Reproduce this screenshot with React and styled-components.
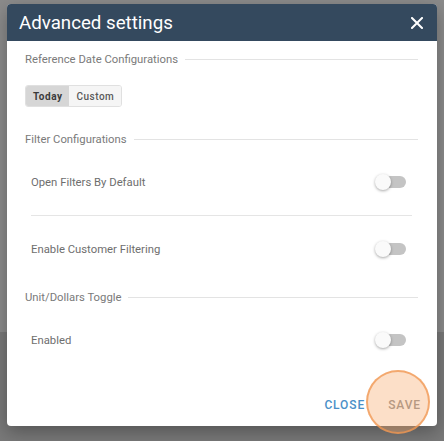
import React from 'react'
import styled, {createGlobalStyle} from 'styled-components'

const GlobalStyle = createGlobalStyle`
  html, body {
    margin: 0;
    padding: 0;
    background: #898989;
    font-family: Roboto, "Liberation Sans", sans-serif;
  }
`

const Backdrop = styled.div`
  width: 444px;
  height: 441px;
  padding: 4px 7px 0;
  box-sizing: border-box;
  background: linear-gradient(to bottom, #8b8b8b 0, #8b8b8b 332px, #797979 332px);
  overflow: hidden;
`

const Dialog = styled.div`
  width: 430px;
  background: #fff;
  border-radius: 4px;
  box-shadow: 0 6px 18px rgba(0, 0, 0, .3);
  display: flex;
  flex-direction: column;
`

const Header = styled.div`
  height: 37px;
  background: #34495e;
  border-radius: 4px 4px 0 0;
  display: flex;
  align-items: center;
  justify-content: space-between;
  padding: 0 14px 0 12px;
`

const Title = styled.h2`
  margin: 0;
  font-size: 18.7px;
  font-weight: 400;
  color: #fff;
`

const CloseIcon = styled.svg`
  width: 12px;
  height: 12px;
  display: block;
`

const Body = styled.div`
  padding: 8px 19px 0 18px;
  display: flex;
  flex-direction: column;
`

const SectionHead = styled.div`
  height: 20px;
  margin-top: ${props => props.top || 0}px;
  display: flex;
  align-items: center;
  gap: 7px;
  font-size: 11.3px;
  color: #7a7a7a;
  &::after {
    content: '';
    flex: 1;
    height: 1px;
    background: #e3e3e3;
  }
`

const ButtonGroup = styled.div`
  margin-top: 16px;
  align-self: flex-start;
  display: flex;
  height: 22px;
  border: 1px solid #e0e0e0;
  border-radius: 3px;
  overflow: hidden;
  box-sizing: border-box;
`

const Segment = styled.div`
  display: flex;
  align-items: center;
  padding: 0 7px;
  font-size: 10px;
  font-weight: ${props => props.active ? 700 : 500};
  letter-spacing: ${props => props.active ? '.5px' : '.5px'};
  color: ${props => props.active ? '#3a3a3a' : '#5a5a5a'};
  background: ${props => props.active ? '#d6d6d6' : '#f5f5f5'};
`

const Row = styled.div`
  height: 66px;
  display: flex;
  align-items: center;
  justify-content: space-between;
  padding: 0 12px 0 6px;
  font-size: 11.3px;
  color: #6e6e6e;
`

const Divider = styled.div`
  height: 1px;
  background: #e5e5e5;
  margin: 0 6px 0 6px;
`

const Track = styled.div`
  position: relative;
  width: 30px;
  height: 12px;
  border-radius: 6px;
  background: #c4c4c4;
`

const Knob = styled.div`
  position: absolute;
  left: -1px;
  top: -2px;
  width: 16px;
  height: 16px;
  border-radius: 50%;
  background: #fafafa;
  box-shadow: 0 1px 3px rgba(0, 0, 0, .35);
`

const Footer = styled.div`
  height: 53px;
  display: flex;
  justify-content: flex-end;
  align-items: flex-start;
  gap: 7px;
  padding: 14px 8px 0 0;
  box-sizing: border-box;
`

const FooterButton = styled.div`
  position: relative;
  height: 36px;
  padding: 0 8px;
  display: flex;
  align-items: center;
  font-size: 12px;
  font-weight: 500;
  letter-spacing: .9px;
  color: ${props => props.primary ? '#4a90c8' : '#8e8e8e'};
`

const Ripple = styled.div`
  position: absolute;
  left: -14px;
  top: -17px;
  width: 60px;
  height: 60px;
  border-radius: 50%;
  background: rgba(248, 170, 110, .38);
  border: 2px solid rgba(240, 150, 80, .75);
`

const Toggle = () => (
  <Track>
    <Knob />
  </Track>
)

const App = () => (
  <Backdrop>
    <GlobalStyle />
    <Dialog>
      <Header>
        <Title>Advanced settings</Title>
        <CloseIcon viewBox="0 0 12 12">
          <path d="M1 1 L11 11 M11 1 L1 11" stroke="#fff" strokeWidth="2" strokeLinecap="square" />
        </CloseIcon>
      </Header>
      <Body>
        <SectionHead>Reference Date Configurations</SectionHead>
        <ButtonGroup>
          <Segment active>Today</Segment>
          <Segment>Custom</Segment>
        </ButtonGroup>
        <SectionHead top={22}>Filter Configurations</SectionHead>
        <Row>
          Open Filters By Default
          <Toggle />
        </Row>
        <Divider />
        <Row>
          Enable Customer Filtering
          <Toggle />
        </Row>
        <SectionHead top={5}>Unit/Dollars Toggle</SectionHead>
        <Row>
          Enabled
          <Toggle />
        </Row>
      </Body>
      <Footer>
        <FooterButton primary>CLOSE</FooterButton>
        <FooterButton>
          <Ripple />
          SAVE
        </FooterButton>
      </Footer>
    </Dialog>
  </Backdrop>
)

export default App
